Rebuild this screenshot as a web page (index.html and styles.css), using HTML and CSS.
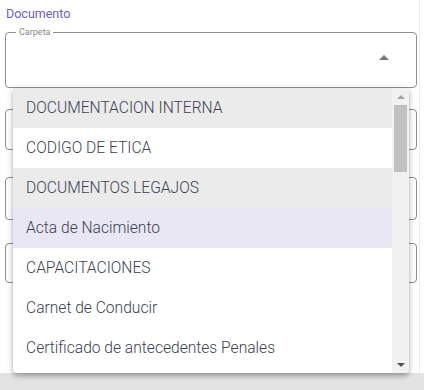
FILE: index.html
```html
<!DOCTYPE html>
<html lang="es">
<head>
  <meta charset="UTF-8">
  <title>Documento</title>
  <link rel="stylesheet" href="styles.css">
</head>
<body>

<div class="page">
  <div class="form">
    <div class="section-title">Documento</div>

    <fieldset class="field field-open">
      <legend>Carpeta</legend>
      <span class="arrow-up"></span>
    </fieldset>

    <div class="field field-plain f2"></div>
    <div class="field field-plain f3"></div>
    <div class="field field-plain f4"></div>

    <div class="panel">
      <ul class="options">
        <li class="option grey">DOCUMENTACION INTERNA</li>
        <li class="option">CODIGO DE ETICA</li>
        <li class="option grey">DOCUMENTOS LEGAJOS</li>
        <li class="option active">Acta de Nacimiento</li>
        <li class="option">CAPACITACIONES</li>
        <li class="option">Carnet de Conducir</li>
        <li class="option">Certificado de antecedentes Penales</li>
        <li class="option"></li>
      </ul>
      <div class="scrollbar">
        <div class="sb-btn"><span class="sb-up"></span></div>
        <div class="sb-track"><div class="sb-thumb"></div></div>
        <div class="sb-btn"><span class="sb-down"></span></div>
      </div>
    </div>
  </div>
  <div class="footer"></div>
</div>

</body>
</html>
```

FILE: styles.css
```css
body {
  margin: 0;
  font-family: Roboto, 'Liberation Sans', sans-serif;
  background: #ffffff;
}

.page {
  width: 424px;
  height: 390px;
  overflow: hidden;
}

.form {
  position: relative;
  height: 373px;
  width: 420px;
  border-right: 1px solid #ececec;
  padding: 0 0 0 5px;
  box-sizing: border-box;
}

.section-title {
  padding: 6px 0 0 1px;
  height: 28px;
  box-sizing: border-box;
  font-size: 12.5px;
  color: #6b5dc9;
}

.field {
  width: 412px;
  border: 1px solid #8f8f8f;
  border-radius: 4px;
  box-sizing: border-box;
}

.field-open {
  position: relative;
  margin: 0;
  padding: 0;
  height: 60px;
}

.field-open legend {
  margin-left: 10px;
  padding: 0 3px;
  font-size: 9px;
  line-height: 9px;
  color: #8a8a8a;
}

.arrow-up {
  position: absolute;
  right: 27px;
  top: 18px;
  width: 0;
  height: 0;
  border-left: 5px solid transparent;
  border-right: 5px solid transparent;
  border-bottom: 5px solid #777777;
}

.field-plain {
  height: 41px;
}

.f2 { margin-top: 21px; }
.f3 { margin-top: 27px; height: 43px; }
.f4 { margin-top: 23px; height: 40px; }

.panel {
  position: absolute;
  top: 88px;
  left: 13px;
  width: 396px;
  height: 285px;
  display: flex;
  background: #ffffff;
  border-radius: 0 0 4px 4px;
  overflow: hidden;
  box-shadow: 0 2px 4px -1px rgba(0,0,0,.2), 0 4px 5px 0 rgba(0,0,0,.14), 0 1px 10px 0 rgba(0,0,0,.12);
}

.options {
  flex: 1;
  list-style: none;
  margin: 0;
  padding: 0;
}

.option {
  height: 40px;
  line-height: 40px;
  padding-left: 13px;
  font-size: 15.6px;
  font-weight: 300;
  color: #3b4250;
  white-space: nowrap;
}

.option.grey {
  background: #ebebeb;
}

.option.active {
  background: #e8e7f3;
}

.scrollbar {
  width: 17px;
  background: #f1f1f1;
  display: flex;
  flex-direction: column;
}

.sb-btn {
  height: 17px;
  display: flex;
  align-items: center;
  justify-content: center;
}

.sb-up {
  border-left: 4px solid transparent;
  border-right: 4px solid transparent;
  border-bottom: 4px solid #a3a3a3;
}

.sb-down {
  border-left: 4px solid transparent;
  border-right: 4px solid transparent;
  border-top: 4px solid #505050;
}

.sb-track {
  flex: 1;
  padding: 0 2px;
}

.sb-thumb {
  height: 67px;
  background: #c1c1c1;
}

.footer {
  height: 17px;
  background: #e3e3e3;
}
```
